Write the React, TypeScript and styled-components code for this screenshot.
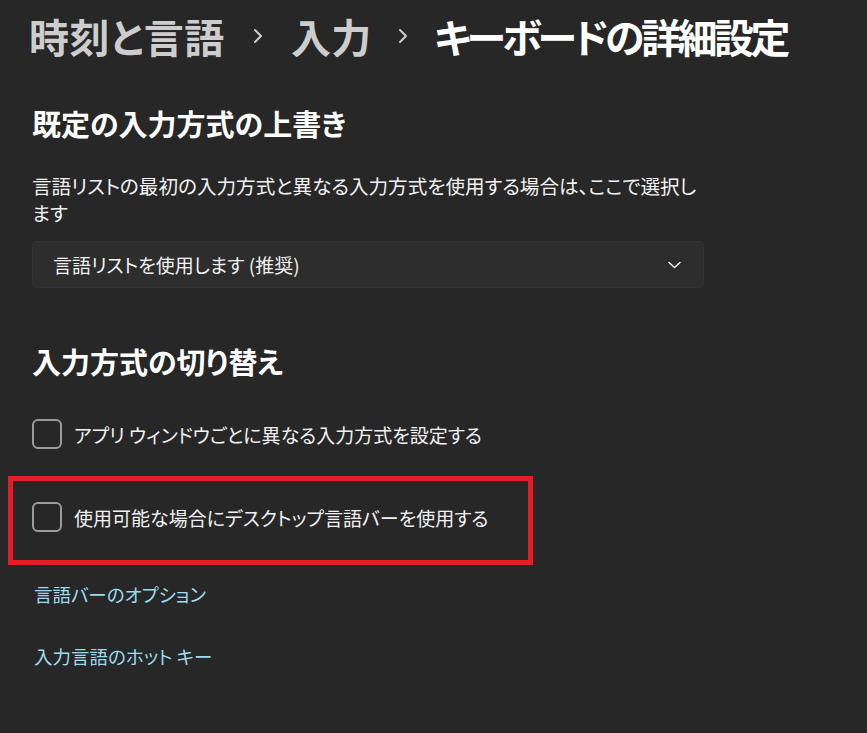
import styled, { createGlobalStyle } from "styled-components";

const GlobalStyle = createGlobalStyle`
    html, body {
        margin: 0;
        background: #272727;
    }
    body {
        font-family: "Noto Sans CJK JP", "Noto Sans", sans-serif;
        font-feature-settings: "palt";
        color: #ffffff;
    }
`;

const Page = styled.div`
    width: 867px;
    height: 733px;
    padding-left: 32px;
    box-sizing: border-box;
    overflow: hidden;
`;

const Breadcrumb = styled.nav`
    display: flex;
    align-items: center;
    height: 72px;
    margin-left: -3px;
`;

const Crumb = styled.span<{ $current?: boolean }>`
    font-size: 40px;
    font-weight: 700;
    line-height: 1;
    letter-spacing: ${(props) => (props.$current ? "-3.5px" : "0.5px")};
    color: ${(props) => (props.$current ? "#ffffff" : "#cdcdcd")};
`;

const Separator = styled.span<{ $width: number }>`
    display: flex;
    align-items: center;
    justify-content: center;
    width: ${(props) => props.$width}px;
    color: #cdcdcd;
`;

const SectionTitle = styled.h2<{ $top: number }>`
    margin: ${(props) => props.$top}px 0 0;
    font-size: 29px;
    font-weight: 700;
    line-height: 40px;
`;

const Description = styled.p`
    margin: 29px 0 0;
    width: 680px;
    font-size: 19.6px;
    line-height: 27px;
    color: #f2f2f2;
`;

const Select = styled.div`
    display: flex;
    align-items: center;
    justify-content: space-between;
    box-sizing: border-box;
    width: 672px;
    height: 47px;
    margin-top: 15px;
    padding: 0 22px 0 20px;
    background: #2d2d2d;
    border: 1px solid #333333;
    border-radius: 5px;
    font-size: 19px;
    color: #f2f2f2;
`;

const CheckRow = styled.label`
    display: flex;
    align-items: center;
    gap: 12px;
    height: 30px;
    font-size: 19px;
    color: #f2f2f2;
`;

const Box = styled.span`
    width: 30px;
    height: 30px;
    box-sizing: border-box;
    border: 2px solid #9b9b9b;
    border-radius: 6px;
    background: #272727;
    flex-shrink: 0;
`;

const FirstOption = styled.div`
    margin-top: 38px;
`;

const Highlight = styled.div`
    width: 525px;
    box-sizing: border-box;
    margin: 27px 0 0 -24px;
    padding: 21px 0 28px 19px;
    border: 5px solid #e81c24;
`;

const LinkText = styled.a<{ $top: number }>`
    display: block;
    margin-top: ${(props) => props.$top}px;
    margin-left: 2px;
    font-size: 18.5px;
    line-height: 27px;
    color: #9cdcf0;
    text-decoration: none;
`;

function Chevron({ size, stroke }: { size: number; stroke: number }) {
    return (
        <svg width={size} height={size * 1.6} viewBox="0 0 10 16" fill="none">
            <path d="M2 2l6 6-6 6" stroke="currentColor" strokeWidth={stroke} strokeLinecap="round" strokeLinejoin="round" />
        </svg>
    );
}

function CheckOption({ label }: { label: string }) {
    return (
        <CheckRow>
            <Box />
            <span>{label}</span>
        </CheckRow>
    );
}

function App() {
    return (
        <Page>
            <GlobalStyle />
            <Breadcrumb>
                <Crumb>時刻と言語</Crumb>
                <Separator $width={66}>
                    <Chevron size={10} stroke={2} />
                </Separator>
                <Crumb>入力</Crumb>
                <Separator $width={62}>
                    <Chevron size={10} stroke={2} />
                </Separator>
                <Crumb $current>キーボードの詳細設定</Crumb>
            </Breadcrumb>

            <SectionTitle $top={31}>既定の入力方式の上書き</SectionTitle>
            <Description>
                言語リストの最初の入力方式と異なる入力方式を使用する場合は、ここで選択します
            </Description>
            <Select>
                <span>言語リストを使用します (推奨)</span>
                <svg width="13" height="8" viewBox="0 0 13 8" fill="none">
                    <path d="M1 1.5l5.5 5 5.5-5" stroke="#ffffff" strokeWidth="1.4" strokeLinecap="round" strokeLinejoin="round" />
                </svg>
            </Select>

            <SectionTitle $top={53}>入力方式の切り替え</SectionTitle>
            <FirstOption>
                <CheckOption label="アプリ ウィンドウごとに異なる入力方式を設定する" />
            </FirstOption>
            <Highlight>
                <CheckOption label="使用可能な場合にデスクトップ言語バーを使用する" />
            </Highlight>

            <LinkText $top={16}>言語バーのオプション</LinkText>
            <LinkText $top={35}>入力言語のホット キー</LinkText>
        </Page>
    );
}

export default App;
